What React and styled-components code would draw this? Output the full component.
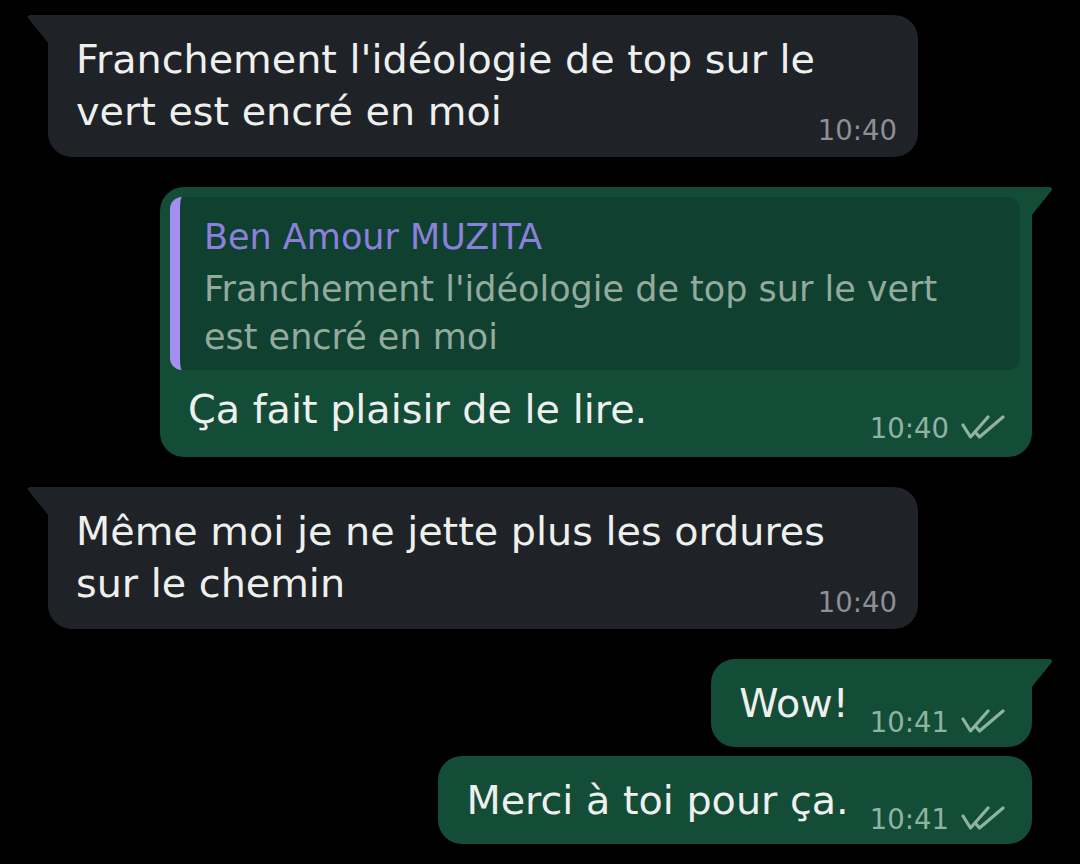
import React from "react";
import styled, { createGlobalStyle, css } from "styled-components";

const GlobalStyle = createGlobalStyle`
  html, body {
    margin: 0;
    padding: 0;
    background: #000;
  }
  body {
    font-family: "DejaVu Sans", "Noto Sans", sans-serif;
    -webkit-font-smoothing: antialiased;
  }
`;

const Chat = styled.div`
  width: 1080px;
  height: 864px;
  box-sizing: border-box;
  padding: 15px 48px 0 48px;
  display: flex;
  flex-direction: column;
  overflow: hidden;
  background: #000;
`;

const Row = styled.div`
  display: flex;
  justify-content: ${(p) => (p.$out ? "flex-end" : "flex-start")};
  margin-top: ${(p) => p.$gap ?? 0}px;
`;

const tailIn = css`
  &::before {
    content: "";
    position: absolute;
    top: 0;
    left: -20px;
    width: 21px;
    height: 29px;
    background: inherit;
    clip-path: polygon(2px 0, 100% 0, 100% 100%, 0 3px, 0 1px);
  }
`;

const tailOut = css`
  &::before {
    content: "";
    position: absolute;
    top: 0;
    right: -20px;
    width: 21px;
    height: 29px;
    background: inherit;
    clip-path: polygon(0 0, calc(100% - 2px) 0, 100% 1px, 100% 3px, 0 100%);
  }
`;

const Bubble = styled.div`
  position: relative;
  box-sizing: border-box;
  width: ${(p) => (p.$width ? `${p.$width}px` : "auto")};
  background: ${(p) => (p.$out ? "#144d37" : "#1f2327")};
  border-radius: 24px;
  ${(p) =>
    p.$tail && !p.$out &&
    css`
      border-top-left-radius: 0;
      ${tailIn}
    `}
  ${(p) =>
    p.$tail && p.$out &&
    css`
      border-top-right-radius: 0;
      ${tailOut}
    `}
`;

const Content = styled.div`
  display: flex;
  align-items: flex-end;
  justify-content: space-between;
  gap: ${(p) => (p.$out ? "21px" : "0")};
  padding: ${(p) => (p.$reply ? "13px" : "18px")} ${(p) => (p.$out ? "27px" : "21px")}
    ${(p) => (p.$reply ? "22px" : p.$out ? "18px" : "20px")} 28px;
`;

const Text = styled.div`
  min-width: 0;
  color: #eef0ee;
  font-size: 39.7px;
  line-height: 52px;
  white-space: nowrap;
`;

const Meta = styled.div`
  display: inline-flex;
  align-items: baseline;
  gap: 12px;
  margin-bottom: -10px;
  flex-shrink: 0;
  color: ${(p) => (p.$out ? "#8fb3a3" : "#8c9095")};
  font-size: 27.5px;
  line-height: 34px;
`;

const Ticks = styled.svg`
  width: 44px;
  height: 24px;
  display: block;
  align-self: flex-end;
  margin-bottom: 6px;
`;

const Quote = styled.div`
  margin: 10px 12px 0 10px;
  background: #10402f;
  border-left: 10px solid #a28ff0;
  border-radius: 12px;
  padding: 16px 20px 9px 24px;
`;

const QuoteName = styled.div`
  color: #8b80dc;
  font-size: 35px;
  line-height: 48px;
  margin-bottom: 4px;
`;

const QuoteText = styled.div`
  color: #93aa9e;
  font-size: 35px;
  line-height: 48px;
`;

function DoubleTick() {
  return (
    <Ticks viewBox="0 0 44 24" fill="none" stroke="currentColor" strokeWidth="3.2" strokeLinecap="round" strokeLinejoin="round">
      <path d="M2 10 L9.5 22 L27 2" />
      <path d="M15.5 18.5 L18.5 22 L42 2" />
    </Ticks>
  );
}

function Time({ out, children }) {
  return (
    <Meta $out={out}>
      <span>{children}</span>
      {out && <DoubleTick />}
    </Meta>
  );
}

export default function App() {
  return (
    <>
      <GlobalStyle />
      <Chat>
        <Row>
          <Bubble $tail $width={870}>
            <Content>
              <Text>
                Franchement l'idéologie de top sur le
                <br />
                vert est encré en moi
              </Text>
              <Time>10:40</Time>
            </Content>
          </Bubble>
        </Row>

        <Row $out $gap={30}>
          <Bubble $out $tail $width={872}>
            <Quote>
              <QuoteName>Ben Amour MUZITA</QuoteName>
              <QuoteText>
                Franchement l'idéologie de top sur le vert
                <br />
                est encré en moi
              </QuoteText>
            </Quote>
            <Content $out $reply>
              <Text>Ça fait plaisir de le lire.</Text>
              <Time out>10:40</Time>
            </Content>
          </Bubble>
        </Row>

        <Row $gap={30}>
          <Bubble $tail $width={870}>
            <Content>
              <Text>
                Même moi je ne jette plus les ordures
                <br />
                sur le chemin
              </Text>
              <Time>10:40</Time>
            </Content>
          </Bubble>
        </Row>

        <Row $out $gap={30}>
          <Bubble $out $tail>
            <Content $out>
              <Text>Wow!</Text>
              <Time out>10:41</Time>
            </Content>
          </Bubble>
        </Row>

        <Row $out $gap={9}>
          <Bubble $out>
            <Content $out>
              <Text>Merci à toi pour ça.</Text>
              <Time out>10:41</Time>
            </Content>
          </Bubble>
        </Row>
      </Chat>
    </>
  );
}
